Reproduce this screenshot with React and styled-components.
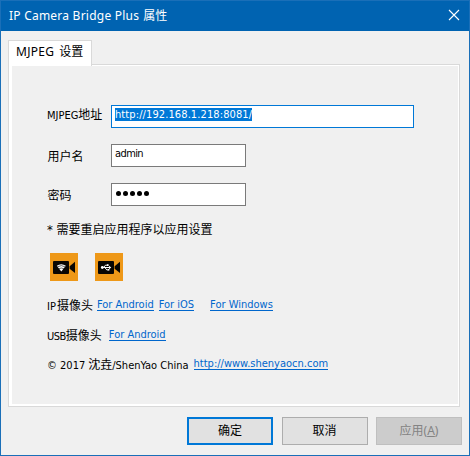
import React from 'react';
import styled, { createGlobalStyle, css } from 'styled-components';

const Global = createGlobalStyle`
  * { box-sizing: border-box; }
  body { margin: 0; overflow: hidden; }
`;

const Dialog = styled.div`
  width: 470px;
  height: 456px;
  display: flex;
  flex-direction: column;
  background: #f0f0f0;
  border: 1px solid #1a6fb8;
  color: #000;
  font: 12px/16px "Noto Sans", "Noto Sans CJK SC", sans-serif;
  white-space: nowrap;
`;

const TitleBar = styled.header`
  height: 30px;
  flex: none;
  display: flex;
  justify-content: space-between;
  padding: 6px 9px 0 8px;
  background: #0063b1;
  color: #fff;
`;

const Title = styled.div`
  display: flex;
  align-items: baseline;
  height: 16px;
  gap: 4px;
`;

const Latin = styled.span`
  letter-spacing: ${(p) => p.$spacing || 0}px;
`;

const Asterisk = styled.span`
  width: 6px;
  font-size: 13px;
`;

const CloseButton = styled.button`
  width: 12px;
  height: 12px;
  margin-top: 2px;
  padding: 0;
  border: 0;
  background: none;
  svg { display: block; }
`;

const TabStrip = styled.div`
  height: 25px;
  flex: none;
  margin: 9px 0 -1px 7px;
  display: flex;
  position: relative;
`;

const Tab = styled.div`
  width: 84px;
  height: 26px;
  display: flex;
  align-items: baseline;
  gap: 5px;
  padding: 2px 0 0 7px;
  background: #fff;
  border: 1px solid #d9d9d9;
  border-bottom: 0;
`;

const TabPage = styled.main`
  width: 452px;
  height: 343px;
  flex: none;
  margin-left: 7px;
  display: flex;
  flex-direction: column;
  padding: 39px 0 0 35px;
  background: #f0f0f0;
  border: 1px solid #d9d9d9;
  box-shadow: inset 3px 0 #fff, inset -1px 0 #fff, inset 0 1px #fff, inset 0 -2px #fff;
  font-family: "DejaVu Sans Condensed", "Noto Sans CJK SC", sans-serif;
  font-size: 11px;
`;

const FieldRow = styled.div`
  height: 23px;
  flex: none;
  display: flex;
  margin: 1px 0 15px 3px;
`;

const Line = styled.div`
  height: 16px;
  flex: none;
  display: flex;
  align-items: baseline;
  margin: ${(p) => p.$top}px 0 0 3px;
`;

const Label = styled.label`
  width: 64px;
  height: 16px;
  display: flex;
  align-items: baseline;
  margin-top: ${(p) => p.$top}px;
`;

const Han = styled.span`
  font-family: "Noto Sans CJK SC", sans-serif;
  font-size: 12px;
  margin-left: ${(p) => p.$left || 0}px;
`;

const Field = styled.div`
  width: ${(p) => p.$width}px;
  height: 23px;
  padding: 1px 3px;
  display: flex;
  background: #fff;
  border: 1px solid ${(p) => (p.$focused ? '#0078d7' : '#7a7a7a')};
`;

const Selection = styled.span`
  height: 13px;
  margin-top: 1px;
  line-height: 13px;
  background: #0078d7;
  color: #fff;
  letter-spacing: 0.1px;
`;

const Dots = styled.div`
  display: flex;
  gap: 2px;
  padding: 6px 0 0 1px;
`;

const Dot = styled.i`
  width: 5px;
  height: 5px;
  border-radius: 50%;
  background: #000;
`;

const Link = styled.a`
  align-self: flex-start;
  height: 13px;
  line-height: 14px;
  margin: 1px 0 0 ${(p) => p.$left}px;
  color: #0066cc;
  border-bottom: 1px solid #0066cc;
`;

const Apps = styled.div`
  display: flex;
  gap: 17px;
  margin: 16px 0 0 6px;
  svg { display: block; }
`;

const Actions = styled.footer`
  display: flex;
  gap: 8.5px;
  margin: 10px 0 0 186px;
`;

const Button = styled.button`
  width: 86px;
  height: 28px;
  display: flex;
  align-items: center;
  justify-content: center;
  padding: 0 0 1px;
  font: 12px/16px "Noto Sans", "Noto Sans CJK SC", sans-serif;
  color: #000;
  background: #e1e1e1;
  border: 1px solid #adadad;
  ${(p) => p.$primary && css`border: 2px solid #0078d7;`}
  &:disabled { color: #838383; background: #ccc; border-color: #bfbfbf; }
`;

const Camera = ({ children }) => (
  <svg width="28" height="28" viewBox="0 0 28 28">
    <rect width="28" height="28" fill="#ee9818" />
    <rect x="3" y="8" width="16" height="13" rx="1" fill="#080603" />
    <path d="M19.6 13.3 25 8.8V20l-5.4-4.2z" fill="#080603" />
    {children}
  </svg>
);

export default function App() {
  return (
    <Dialog>
      <Global />
      <TitleBar>
        <Title><Latin $spacing={0.23}>IP Camera Bridge Plus</Latin><Han>属性</Han></Title>
        <CloseButton aria-label="关闭">
          <svg width="12" height="12" viewBox="0 0 12 12">
            <path d="M1 1l10 10M11 1L1 11" stroke="#fff" strokeWidth="1.1" />
          </svg>
        </CloseButton>
      </TitleBar>
      <TabStrip>
        <Tab><Latin $spacing={0.3}>MJPEG</Latin><Han>设置</Han></Tab>
      </TabStrip>
      <TabPage>
        <FieldRow>
          <Label $top={1}>MJPEG<Han>地址</Han></Label>
          <Field $width={303} $focused><Selection>http://192.168.1.218:8081/</Selection></Field>
        </FieldRow>
        <FieldRow>
          <Label $top={4}><Han $left={0.5}>用户名</Han></Label>
          <Field $width={135}><Latin $spacing={-0.6}>admin</Latin></Field>
        </FieldRow>
        <FieldRow>
          <Label $top={4}><Han $left={0.5}>密码</Han></Label>
          <Field $width={135}>
            <Dots>{[0, 1, 2, 3, 4].map((n) => <Dot key={n} />)}</Dots>
          </Field>
        </FieldRow>
        <Line $top={0}><Asterisk>*</Asterisk><Han $left={3.5}>需要重启应用程序以应用设置</Han></Line>
        <Apps>
          <Camera>
            <path d="M6.8 12.8q4.5-3.2 9 0l-4.5 5.8z" fill="#fff" />
            <path d="M7.4 13.9q3.9-2.6 7.8 0M8.6 15.8q2.7-1.6 5.4 0" fill="none" stroke="#080603" strokeWidth="0.6" />
          </Camera>
          <Camera>
            <g fill="none" stroke="#fff" strokeWidth="1">
              <path d="M7 14.5h8M8.5 14.5l2-2.3h2.2M9.8 14.5l2 2.4h1.7" />
            </g>
            <circle cx="7.3" cy="14.5" r="1.4" fill="#fff" />
            <path d="M14 12.8l2.3 1.7-2.3 1.7zM12 11.3h1.6v1.6H12zM12.8 16h1.6v1.6h-1.6z" fill="#fff" />
          </Camera>
        </Apps>
        <Line $top={16}>
          <Latin>IP</Latin><Han $left={1}>摄像头</Han>
          <Link $left={4}>For Android</Link>
          <Link $left={5}>For iOS</Link>
          <Link $left={16}>For Windows</Link>
        </Line>
        <Line $top={14}>
          <Latin $spacing={-0.5}>USB</Latin><Han>摄像头</Han>
          <Link $left={7}>For Android</Link>
        </Line>
        <Line $top={13}>
          © 2017<Han $left={3}>沈垚</Han>/ShenYao China
          <Link $left={5}>http://www.shenyaocn.com</Link>
        </Line>
      </TabPage>
      <Actions>
        <Button $primary>确定</Button>
        <Button>取消</Button>
        <Button disabled>应用(<u>A</u>)</Button>
      </Actions>
    </Dialog>
  );
}
